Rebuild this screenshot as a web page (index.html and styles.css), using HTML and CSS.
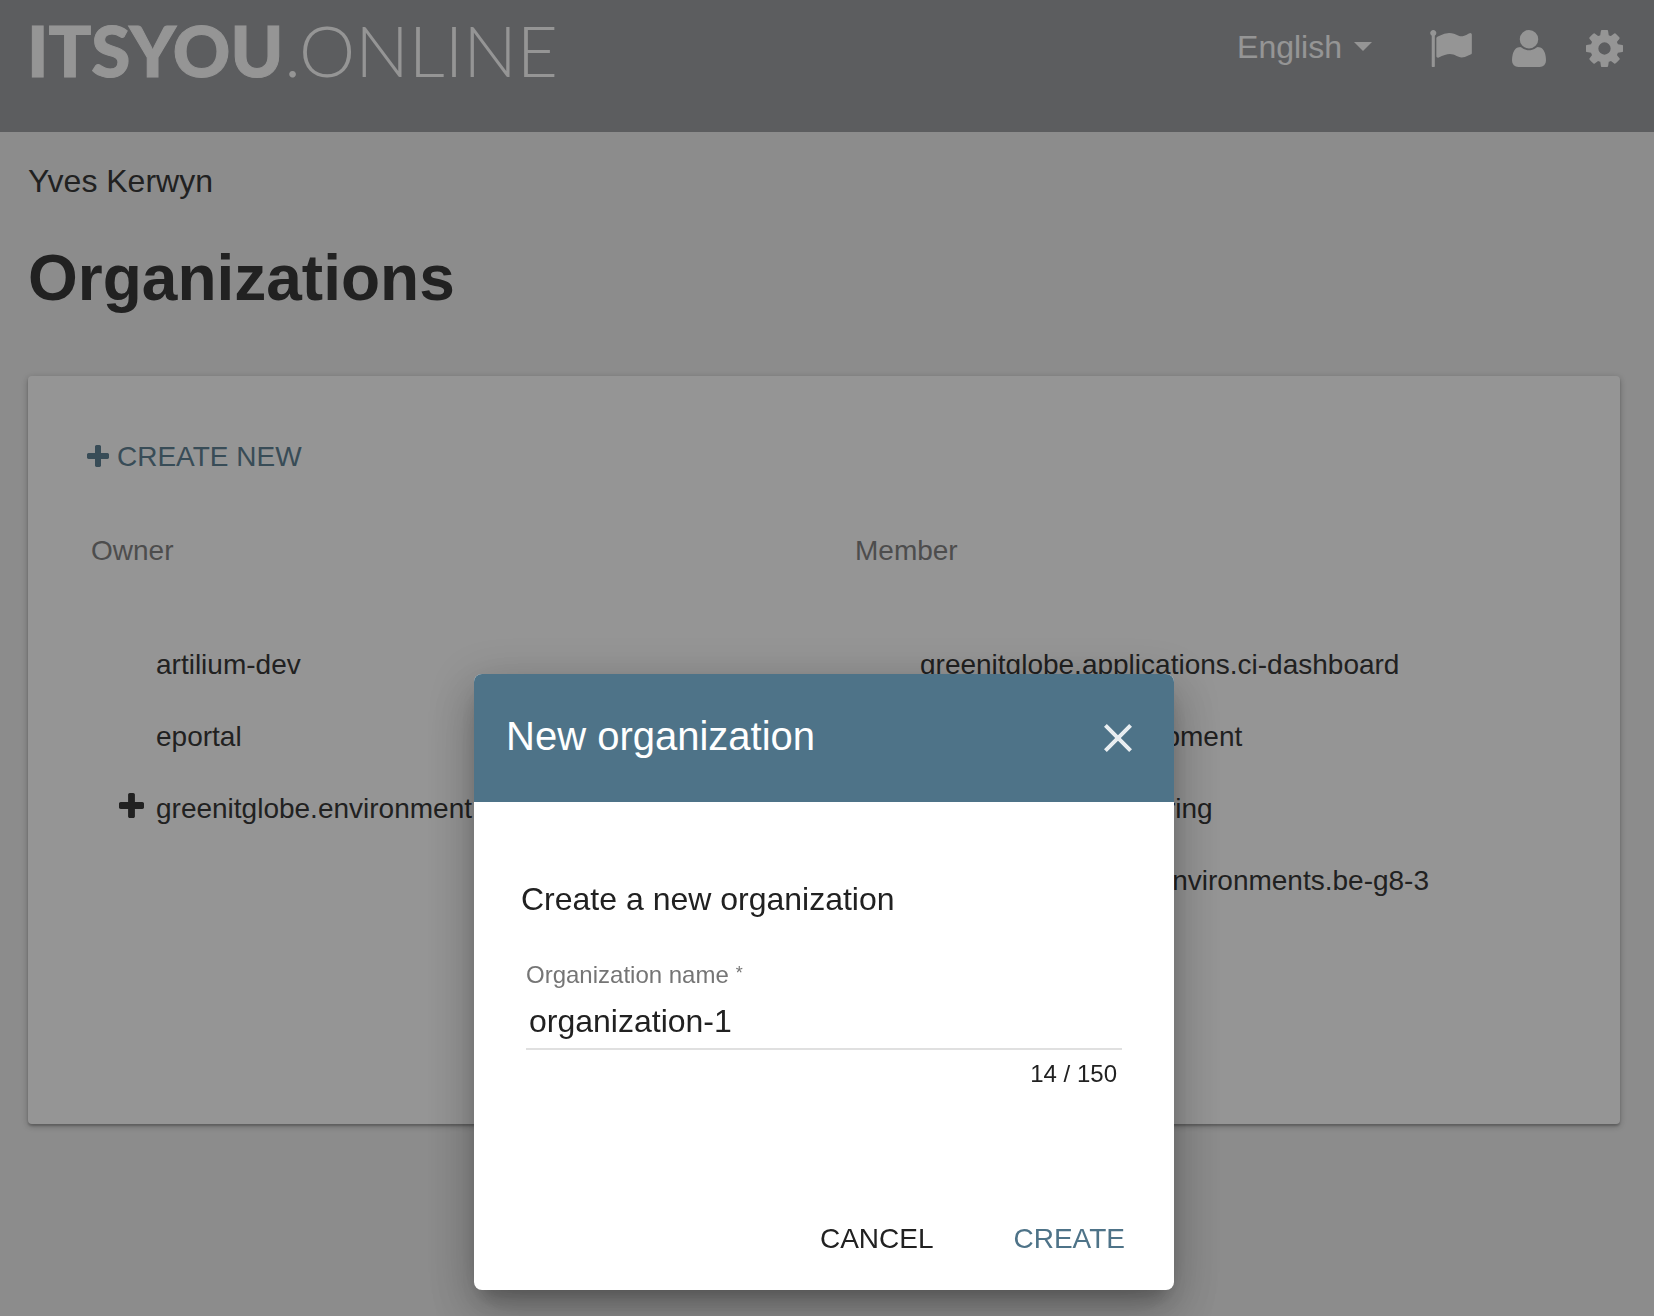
FILE: index.html
```html
<!DOCTYPE html>
<html lang="en">
<head>
  <meta charset="utf-8">
  <meta name="viewport" content="width=device-width, initial-scale=1">
  <title>ItsYou.online - Organizations</title>
  <link rel="stylesheet" href="styles.css">
</head>
<body>
  <svg class="sprite" aria-hidden="true">
    <symbol id="plus" viewBox="192 128 1408 1408">
      <path d="M1600 736v192q0 40-28 68t-68 28h-416v416q0 40-28 68t-68 28h-192q-40 0-68-28t-28-68v-416h-416q-40 0-68-28t-28-68v-192q0-40 28-68t68-28h416v-416q0-40 28-68t68-28h192q40 0 68 28t28 68v416h416q40 0 68 28t28 68z"/>
    </symbol>
  </svg>

  <header class="topbar">
    <a class="logo" href="#"><span class="logo-strong">ITSYOU</span><span class="logo-light">.ONLINE</span></a>
    <nav class="topnav" aria-label="Main">
      <button class="language" type="button">English<span class="caret"></span></button>
      <a class="nav-icon" href="#" aria-label="Organizations">
        <svg class="icon-flag" viewBox="64 128 1728 1536"><path d="M320 256q0 72-64 110v1266q0 13-9.500 22.500t-22.500 9.500h-64q-13 0-22.500-9.500t-9.500-22.500v-1266q-64-38-64-110 0-53 37.500-90.500t90.500-37.500 90.500 37.500 37.500 90.500zm1472 64v763q0 25-12.500 38.500t-39.500 27.500q-215 116-369 116-61 0-123.500-22t-108.500-48-115.500-48-142.500-22q-192 0-464 146-17 9-33 9-26 0-45-19t-19-45v-742q0-32 31-55 21-14 79-43 236-120 421-120 107 0 200 29t219 88q38 19 88 19 54 0 117.500-21t110-47 88-47 54.500-21q26 0 45 19t19 45z"/></svg>
      </a>
      <a class="nav-icon" href="#" aria-label="Profile">
        <svg class="icon-user" viewBox="192 128 1408 1536"><path d="M1600 1405q0 120-73 189.500t-194 69.500h-874q-121 0-194-69.500t-73-189.500q0-53 3.500-103.500t14-109 26.500-108.500 43-97.500 62-81 85.500-53.500 111.500-20q9 0 42 21.500t74.500 48 108 48 133.500 21.500 133.500-21.500 108-48 74.500-48 42-21.500q61 0 111.500 20t85.500 53.500 62 81 43 97.500 26.500 108.500 14 109 3.500 103.500zm-320-893q0 159-112.500 271.500t-271.500 112.500-271.500-112.500-112.500-271.500 112.500-271.500 271.500-112.500 271.500 112.500 112.500 271.500z"/></svg>
      </a>
      <a class="nav-icon" href="#" aria-label="Settings">
        <svg class="icon-cog" viewBox="128 128 1536 1536"><path d="M1152 896q0-106-75-181t-181-75-181 75-75 181 75 181 181 75 181-75 75-181zm512-109v222q0 12-8 23t-20 13l-185 28q-19 54-39 91 35 50 107 138 10 12 10 25t-9 23q-27 37-99 108t-94 71q-12 0-26-9l-138-108q-44 23-91 38-16 136-29 186-7 28-36 28h-222q-14 0-24.500-8.500t-11.500-21.500l-28-184q-49-16-90-37l-141 107q-10 9-25 9-14 0-25-11-126-114-165-168-7-10-7-23 0-12 8-23 15-21 51-66.500t54-70.500q-27-50-41-99l-183-27q-13-2-21-12.500t-8-23.500v-222q0-12 8-23t19-13l186-28q14-46 39-92-40-57-107-138-10-12-10-24 0-10 9-23 26-36 98.500-107.500t94.500-71.500q13 0 26 10l138 107q44-23 91-38 16-136 29-186 7-28 36-28h222q14 0 24.500 8.500t11.500 21.500l28 184q49 16 90 37l142-107q9-9 24-9 13 0 25 10 129 119 165 170 7 8 7 22 0 12-8 23-15 21-51 66.500t-54 70.500q26 50 41 98l183 28q13 2 21 12.500t8 23.500z"/></svg>
      </a>
    </nav>
  </header>

  <main class="page">
    <p class="user-name">Yves Kerwyn</p>
    <h1 class="page-title">Organizations</h1>

    <section class="card">
      <button class="create-new" type="button">
        <svg class="icon-plus" aria-hidden="true"><use href="#plus"/></svg>CREATE NEW
      </button>
      <div class="columns">
        <div class="column">
          <h2 class="column-title">Owner</h2>
          <ul class="org-list">
            <li class="org"><span class="expander"></span><a href="#">artilium-dev</a></li>
            <li class="org"><span class="expander"></span><a href="#">eportal</a></li>
            <li class="org">
              <button class="expander" type="button" aria-label="Expand"><svg class="icon-expand"><use href="#plus"/></svg></button>
              <a href="#">greenitglobe.environment</a>
            </li>
          </ul>
        </div>
        <div class="column">
          <h2 class="column-title">Member</h2>
          <ul class="org-list">
            <li class="org"><span class="expander"></span><a href="#">greenitglobe.applications.ci-dashboard</a></li>
            <li class="org"><span class="expander"></span><a href="#">greenitglobe.development</a></li>
            <li class="org"><span class="expander"></span><a href="#">greenitglobe.monitoring</a></li>
            <li class="org"><span class="expander"></span><a href="#">greenitglobe.cloud.environments.be-g8-3</a></li>
          </ul>
        </div>
      </div>
    </section>
  </main>

  <div class="overlay">
    <form class="dialog" role="dialog" aria-modal="true" aria-labelledby="dialog-title">
      <div class="dialog-header">
        <h2 class="dialog-title" id="dialog-title">New organization</h2>
        <button class="close" type="button" aria-label="Close">
          <svg class="icon-close" viewBox="0 0 24 24"><path d="M19 6.41l-1.41-1.41-5.59 5.59-5.59-5.59-1.41 1.41 5.59 5.59-5.59 5.59 1.41 1.41 5.59-5.59 5.59 5.59 1.41-1.41-5.59-5.59z"/></svg>
        </button>
      </div>
      <div class="dialog-body">
        <p class="dialog-lead">Create a new organization</p>
        <div class="field">
          <label class="field-label" for="org-name">Organization name<span class="required">*</span></label>
          <input class="field-input" id="org-name" type="text" value="organization-1" maxlength="150" required>
          <div class="field-counter">14 / 150</div>
        </div>
      </div>
      <div class="dialog-actions">
        <button class="action" type="button">CANCEL</button>
        <button class="action action-primary" type="submit">CREATE</button>
      </div>
    </form>
  </div>
</body>
</html>
```

FILE: styles.css
```css
* {
  box-sizing: border-box;
}

body {
  margin: 0;
  min-height: 100vh;
  background: #ededed;
  color: #212121;
  font-family: "Liberation Sans", Arial, sans-serif;
  font-size: 28px;
  line-height: 32px;
}

h1, h2, p, ul {
  margin: 0;
  padding: 0;
}

button {
  border: 0;
  padding: 0;
  background: none;
  color: inherit;
  font: inherit;
  cursor: pointer;
}

a {
  color: inherit;
  text-decoration: none;
}

svg {
  display: block;
  fill: currentColor;
}

.sprite {
  position: absolute;
  width: 0;
  height: 0;
}

/* Top bar */
.topbar {
  display: flex;
  justify-content: space-between;
  align-items: flex-start;
  height: 132px;
  padding: 8px 31px 0 27px;
  background: #929498;
  color: #fff;
}

.logo {
  display: flex;
  gap: 1px;
  font-family: Lato, sans-serif;
  font-size: 71px;
  line-height: 84px;
  white-space: nowrap;
}

.logo-strong {
  font-weight: 900;
  -webkit-text-stroke: 1px currentColor;
}

.logo-light {
  font-weight: 300;
}

.topnav {
  display: flex;
  align-items: center;
  gap: 40px;
  padding-top: 18px;
}

.language {
  display: flex;
  align-items: center;
  gap: 12px;
  margin-right: 18px;
  font-size: 32px;
  line-height: 40px;
}

.caret {
  border: 9px solid transparent;
  border-top-color: #fff;
  border-bottom: 0;
}

.nav-icon {
  padding-top: 4px;
}

.icon-flag {
  width: 42px;
  height: 37px;
}

.icon-user {
  width: 34px;
  height: 37px;
}

.icon-cog {
  width: 37px;
  height: 37px;
}

/* Page */
.page {
  padding: 29px 34px 48px 28px;
}

.user-name {
  font-size: 32px;
  line-height: 40px;
}

.page-title {
  margin-top: 41px;
  font-size: 64px;
  line-height: 72px;
}

.card {
  margin-top: 62px;
  padding: 65px 32px 207px;
  border-radius: 4px;
  background: #fff;
  box-shadow: 0 2px 6px rgba(0, 0, 0, 0.3), 0 2px 2px rgba(0, 0, 0, 0.2);
}

.create-new {
  display: flex;
  align-items: center;
  gap: 8px;
  margin-left: 27px;
  color: #4e7388;
}

.icon-plus {
  width: 22px;
  height: 22px;
  margin-bottom: 3px;
}

.columns {
  display: grid;
  grid-template-columns: 1fr 1fr;
  margin-top: 62px;
}

.column {
  padding-left: 31px;
}

.column-title {
  color: #757575;
  font-size: 28px;
  font-weight: 400;
}

.org-list {
  margin-top: 62px;
  padding-left: 28px;
  list-style: none;
}

.org {
  display: flex;
  align-items: center;
  gap: 12px;
  height: 72px;
}

.expander {
  width: 25px;
  padding-bottom: 7px;
}

.icon-expand {
  width: 25px;
  height: 25px;
}

/* Dialog */
.overlay {
  position: fixed;
  inset: 0;
  display: flex;
  justify-content: center;
  align-items: flex-end;
  padding: 26px 6px 26px 0;
  background: rgba(33, 33, 33, 0.48);
}

.dialog {
  width: 700px;
  max-width: 100%;
  border-radius: 8px;
  overflow: hidden;
  background: #fff;
  box-shadow: 0 14px 18px -8px rgba(0, 0, 0, 0.2), 0 26px 48px rgba(0, 0, 0, 0.14), 0 10px 46px rgba(0, 0, 0, 0.22);
}

.dialog-header {
  display: flex;
  justify-content: space-between;
  align-items: center;
  height: 128px;
  padding: 0 32px;
  background: #4e7388;
  color: #fff;
}

.dialog-title {
  padding-bottom: 4px;
  font-size: 40px;
  font-weight: 400;
  line-height: 48px;
}

.close {
  color: rgba(255, 255, 255, 0.87);
}

.icon-close {
  width: 48px;
  height: 48px;
}

.dialog-body {
  padding: 77px 47px 0;
}

.dialog-lead {
  font-size: 32px;
  line-height: 40px;
}

.field {
  display: flex;
  flex-direction: column;
  margin: 42px 5px 0;
  font-size: 24px;
  line-height: 28px;
}

.field-label {
  color: #757575;
}

.required {
  margin-left: 7px;
  font-size: 18px;
  line-height: 1;
  vertical-align: 4px;
}

.field-input {
  width: 100%;
  height: 49px;
  margin-top: 12px;
  padding: 0 3px 7px;
  border: 0;
  border-bottom: 2px solid #e0e0e0;
  border-radius: 0;
  outline: 0;
  background: none;
  color: #212121;
  font: inherit;
  font-size: 32px;
  line-height: 40px;
}

.field-counter {
  margin-top: 10px;
  padding-right: 5px;
  text-align: right;
}

.dialog-actions {
  display: flex;
  justify-content: flex-end;
  gap: 80px;
  padding: 135px 49px 35px;
}

.action-primary {
  color: #4e7388;
}
```
